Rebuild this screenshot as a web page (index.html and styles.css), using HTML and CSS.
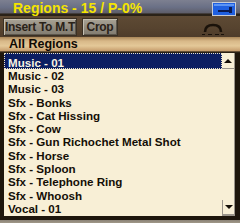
FILE: index.html
```html
<!DOCTYPE html>
<html>
<head>
<meta charset="utf-8">
<link rel="stylesheet" href="styles.css">
</head>
<body>
<div class="win">
  <div class="title">
    <span class="title-text">Regions - 15 / P-0%</span>
    <span class="title-btn">
      <svg width="24" height="14" viewBox="0 0 24 14">
        <rect x="0.5" y="0.5" width="23" height="13" fill="#1f5fe0" stroke="#c8ccd4"/>
        <rect x="2" y="2" width="20" height="2" fill="#5c94f4"/>
        <rect x="6" y="8" width="14" height="2" fill="#0a1a50"/>
        <rect x="17" y="5" width="3" height="6" fill="#0a1a50"/>
      </svg>
    </span>
  </div>
  <div class="toolbar">
    <span class="btn btn-insert">Insert To M.T</span>
    <span class="btn btn-crop">Crop</span>
    <span class="spacer"></span>
    <svg class="arch" width="22" height="14" viewBox="0 0 22 14">
      <path d="M3 9 Q3 2 11 2 Q19 2 19 9" fill="none" stroke="#1a120a" stroke-width="2.6"/>
      <rect x="0" y="11" width="3" height="1" fill="#1a120a"/>
      <rect x="6" y="11" width="4" height="1" fill="#1a120a"/>
      <rect x="13" y="11" width="4" height="1" fill="#1a120a"/>
      <rect x="19" y="11" width="3" height="1" fill="#1a120a"/>
    </svg>
  </div>
  <div class="header">All Regions</div>
  <div class="list">
    <div class="items">
      <div class="item sel">Music - 01</div>
      <div class="item">Music - 02</div>
      <div class="item">Music - 03</div>
      <div class="item">Sfx - Bonks</div>
      <div class="item">Sfx - Cat Hissing</div>
      <div class="item">Sfx - Cow</div>
      <div class="item">Sfx - Gun Richochet Metal Shot</div>
      <div class="item">Sfx - Horse</div>
      <div class="item">Sfx - Sploon</div>
      <div class="item">Sfx - Telephone Ring</div>
      <div class="item">Sfx - Whoosh</div>
      <div class="item">Vocal - 01</div>
    </div>
    <div class="scroll">
      <div class="sbtn up"><span class="tri-up"></span></div>
      <div class="track"></div>
      <div class="sbtn down"><span class="tri-down"></span></div>
    </div>
  </div>
  <div class="footer"></div>
</div>
</body>
</html>
```
FILE: styles.css
```css
* { box-sizing: border-box; }
html, body { margin: 0; padding: 0; }
body {
  width: 240px;
  height: 223px;
  overflow: hidden;
  background: #2a2014;
  font-family: "Liberation Sans", Arial, sans-serif;
}
.win {
  width: 240px;
  height: 223px;
  display: flex;
  flex-direction: column;
}
.title {
  height: 16px;
  flex: none;
  display: flex;
  align-items: center;
  padding-left: 13px;
  padding-right: 4px;
  background: linear-gradient(180deg, #7d8090 0%, #6a7086 45%, #5e5e6a 80%, #2a2218 88%, #2a2218 100%);
}
.title-text {
  flex: 1;
  color: #f4e400;
  font-weight: bold;
  font-size: 14px;
  line-height: 14px;
  margin-top: -1px;
}
.title-btn {
  display: flex;
  margin-top: 1px;
}
.toolbar {
  height: 21px;
  flex: none;
  display: flex;
  align-items: center;
  padding-left: 3px;
  gap: 5px;
  background: linear-gradient(180deg, #5e4a34 0%, #56432f 60%, #4e3c2a 100%);
}
.btn {
  height: 18px;
  margin-top: 1px;
  display: flex;
  align-items: center;
  justify-content: center;
  color: #2a2218;
  font-weight: bold;
  font-size: 12px;
  letter-spacing: -0.3px;
  background: linear-gradient(180deg, #aaa496 0%, #928c80 50%, #827c70 100%);
  border: 1px solid #3a3024;
  box-shadow: inset 1px 1px 0 #c4beb0, inset -1px -1px 0 #5c564c;
}
.btn-insert { width: 74px; }
.btn-crop { width: 36px; }
.spacer { flex: 1; }
.arch { margin-right: 16px; margin-top: 6px; }
.header {
  height: 16px;
  flex: none;
  padding-left: 9px;
  color: #100a04;
  font-weight: bold;
  font-size: 12.5px;
  line-height: 15px;
  background: linear-gradient(180deg, #a88658 0%, #d8b888 25%, #e4c898 55%, #c8a070 85%, #2a2014 94%, #2a2014 100%);
}
.list {
  height: 163px;
  flex: none;
  display: flex;
  background: #f8efd6;
  border-left: 4px solid #1e160c;
  border-right: 5px solid #1e160c;
}
.items {
  flex: 1;
  overflow: hidden;
}
.item {
  height: 13.3px;
  line-height: 14px;
  padding-left: 4px;
  font-size: 11.6px;
  font-weight: bold;
  color: #140e06;
  white-space: nowrap;
}
.item.sel {
  height: 16px;
  line-height: 15px;
  padding-left: 3px;
  padding-top: 1px;
  background: #0c1e62;
  color: #f8f4e4;
  border: 1px dotted #e8e0c4;
}
.scroll {
  width: 13px;
  flex: none;
  display: flex;
  flex-direction: column;
  border-right: 1px solid #9a948a;
}
.sbtn {
  height: 16px;
  flex: none;
  display: flex;
  align-items: center;
  justify-content: center;
  background: #f8efd6;
}
.sbtn.up { border-bottom: 1px solid #9a948a; }
.sbtn.down { border-bottom: 2px solid #9a948a; border-left: 1px solid #9a948a; }
.track { flex: 1; }
.tri-up {
  width: 0; height: 0;
  border-left: 4px solid transparent;
  border-right: 4px solid transparent;
  border-bottom: 4px solid #140e06;
}
.tri-down {
  width: 0; height: 0;
  border-left: 4px solid transparent;
  border-right: 4px solid transparent;
  border-top: 4px solid #140e06;
}
.footer {
  flex: 1;
  background: linear-gradient(180deg, #1e160c 0%, #1e160c 55%, #8c8478 60%, #a09888 100%);
}
```
